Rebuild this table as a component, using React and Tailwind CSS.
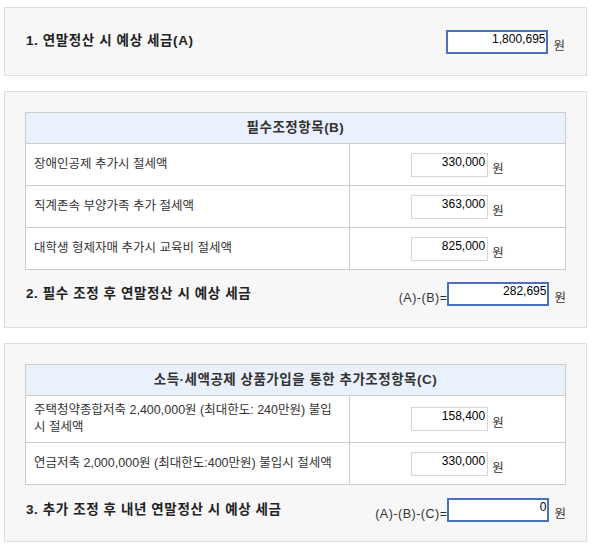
import React from "react";

const FONT = { fontFamily: '"Liberation Sans", "Noto Sans CJK KR", sans-serif' };

function SmallBox({ value }) {
  return (
    <div className="flex items-end">
      <div className="w-[77px] h-[24px] border border-[#d6d6d6] bg-white text-right pr-[2px] pt-[1px] text-[12px] leading-[14px] text-black">
        {value}
      </div>
      <span className="ml-[4px] text-[12.5px] leading-[16px] text-[#333]">원</span>
    </div>
  );
}

function BigBox({ label, value }) {
  return (
    <div className="flex items-end">
      {label && (
        <span className="text-[12.5px] tracking-[0.5px] leading-[16px] text-[#333]">{label}</span>
      )}
      <div className="w-[102px] h-[24px] border-2 border-[#4a72b8] bg-white text-right pr-[1px] pt-0 text-[12px] leading-[14px] text-black">
        {value}
      </div>
      <span className="ml-[5px] text-[12.5px] leading-[16px] text-[#333]">원</span>
    </div>
  );
}

function Row({ children, value, h, last }) {
  return (
    <div className={`flex ${h} ${last ? "" : "border-b border-[#cccccc]"}`}>
      <div className="w-[324px] border-r border-[#cccccc] pl-[8px] flex items-center text-[12.5px] leading-[17px] text-[#333]">
        {children}
      </div>
      <div className="flex-1 flex items-center justify-center">
        <SmallBox value={value} />
      </div>
    </div>
  );
}

function Table({ title, children }) {
  return (
    <div className="border border-[#cccccc] bg-white">
      <div className="h-[31px] bg-[#eaf1fd] border-b border-[#cccccc] flex items-center justify-center font-bold text-[13.5px] tracking-[0.5px] text-[#333]">
        {title}
      </div>
      {children}
    </div>
  );
}

const panel = "border border-[#dedede] bg-[#f7f7f7]";
const titleCls = "font-bold text-[13.5px] tracking-[0.6px] text-[#222]";

export default function App() {
  return (
    <div className="w-[592px] h-[549px] bg-white pt-[7px] pl-[4px]" style={FONT}>
      <div className={`${panel} w-[583px] h-[69px] flex items-center justify-between pl-[21px] pr-[21px]`}>
        <span className={titleCls}>1. 연말정산 시 예상 세금(A)</span>
        <BigBox value="1,800,695" />
      </div>

      <div className={`${panel} w-[583px] mt-[15px] px-[20px] pt-[20px] pb-[21px]`}>
        <Table title="필수조정항목(B)">
          <Row h="h-[42px]" value="330,000">장애인공제 추가시 절세액</Row>
          <Row h="h-[42px]" value="363,000">직계존속 부양가족 추가 절세액</Row>
          <Row h="h-[41px]" value="825,000" last>대학생 형제자매 추가시 교육비 절세액</Row>
        </Table>
        <div className="mt-[12px] h-[24px] flex items-center justify-between pl-[1px]">
          <span className={titleCls}>2. 필수 조정 후 연말정산 시 예상 세금</span>
          <BigBox label="(A)-(B)=" value="282,695" />
        </div>
      </div>

      <div className={`${panel} w-[583px] mt-[15px] px-[20px] pt-[20px] pb-[19px]`}>
        <Table title="소득·세액공제 상품가입을 통한 추가조정항목(C)">
          <Row h="h-[47px]" value="158,400">
            <span>
              주택청약종합저축 2,400,000원 (최대한도: 240만원) 불입
              <br />시 절세액
            </span>
          </Row>
          <Row h="h-[41px]" value="330,000" last>연금저축 2,000,000원 (최대한도:400만원) 불입시 절세액</Row>
        </Table>
        <div className="mt-[13px] h-[24px] flex items-center justify-between pl-[1px]">
          <span className={titleCls}>3. 추가 조정 후 내년 연말정산 시 예상 세금</span>
          <BigBox label="(A)-(B)-(C)=" value="0" />
        </div>
      </div>
    </div>
  );
}
